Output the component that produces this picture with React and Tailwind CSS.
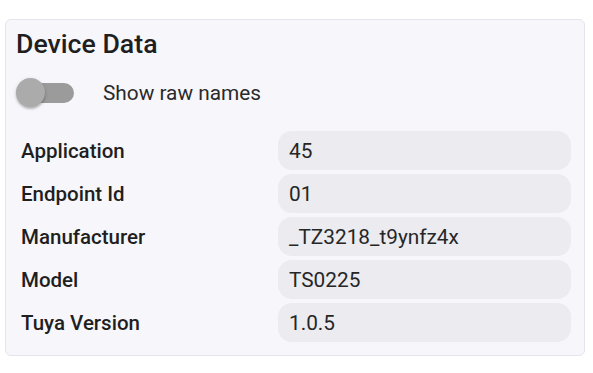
import React from "react";

const rows = [
  ["Application", "45"],
  ["Endpoint Id", "01"],
  ["Manufacturer", "_TZ3218_t9ynfz4x"],
  ["Model", "TS0225"],
  ["Tuya Version", "1.0.5"],
];

export default function App() {
  return (
    <div
      className="w-[593px] h-[373px] bg-white pt-[19px] pl-[5px]"
      style={{ fontFamily: "Roboto, 'Liberation Sans', sans-serif" }}
    >
      <div className="w-[580px] h-[337px] border border-[#e4e4ea] rounded-[6px] bg-[#f7f7fb] pl-[10px] pr-[13px] pt-[8px] text-[#222222]">
        <div className="text-[26.7px] leading-[32px] font-medium text-[#1f1f1f]">Device Data</div>
        <div className="mt-[13px] h-10 flex items-center">
          <div className="relative w-[66px] h-10 flex items-center">
            <div className="absolute left-[7px] top-[10px] w-[51px] h-[20px] rounded-full bg-[#9b9b9b]" />
            <div className="absolute left-0 top-[5px] w-[29px] h-[29px] rounded-full bg-[#ababab] shadow-[0_2px_2px_rgba(0,0,0,0.2),0_1px_4px_rgba(0,0,0,0.12)]" />
          </div>
          <span className="ml-[21px] pt-[2px] text-[20.8px] text-[#2a2a2a]">Show raw names</span>
        </div>
        <div className="mt-[18px] flex flex-col gap-[4px]">
          {rows.map(([k, v]) => (
            <div key={k} className="flex items-center h-[39px]">
              <div className="w-[262px] pl-[5px] pt-[2px] text-[20.5px] font-medium text-[#1f1f1f]">{k}</div>
              <div className="flex-1 h-[39px] rounded-[14px] bg-[#ebebf0] px-[11px] pt-[2px] flex items-center text-[20.8px] text-[#262626]">
                {v}
              </div>
            </div>
          ))}
        </div>
      </div>
    </div>
  );
}
